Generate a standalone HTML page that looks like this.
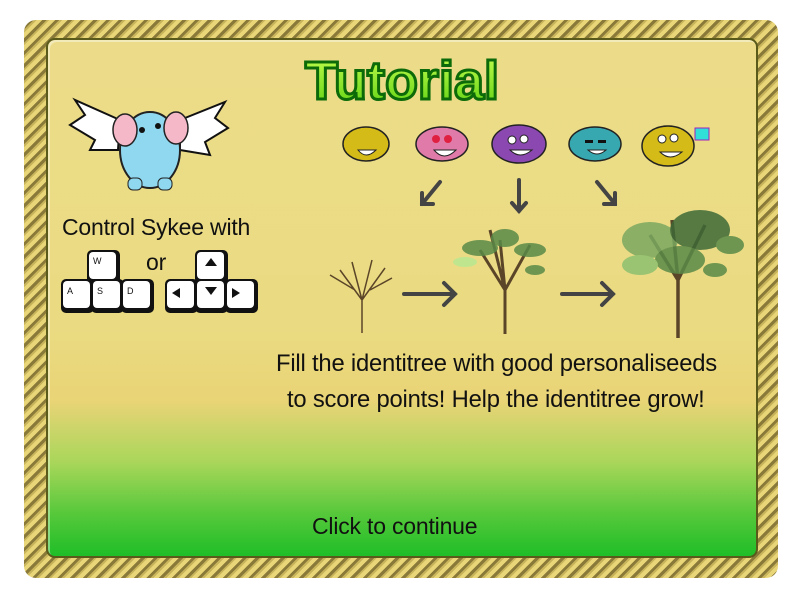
<!DOCTYPE html>
<html><head><meta charset="utf-8"><style>
body{margin:0;width:800px;height:600px;background:#fff;position:relative;overflow:hidden;font-family:"Liberation Sans",sans-serif}
.rope{position:absolute;left:24px;top:20px;width:754px;height:558px;border-radius:12px;
background:repeating-linear-gradient(135deg,#e8d678 0 4px,#8a7a3a 4px 7px,#c8b45a 7px 9px)}
.panel{position:absolute;left:46px;top:38px;width:708px;height:516px;border-radius:9px;border:2px solid #5a5a1a;
background:linear-gradient(#ecdc8a 0%,#eadb82 55%,#e9d476 70%,#a8d65a 82%,#55c83a 92%,#1fbe28 100%);box-shadow:inset 2px 2px 0 rgba(255,255,255,.4)}
.t{position:absolute;color:#111;font-size:23px;white-space:nowrap;letter-spacing:-0.2px}
</style></head><body>
<div class="rope"></div>
<div class="panel"></div>
<svg width="800" height="600" style="position:absolute;left:0;top:0">
<defs><linearGradient id="g" x1="0" y1="0" x2="0" y2="1"><stop offset="0" stop-color="#c8ff50"/><stop offset="1" stop-color="#5ad010"/></linearGradient></defs>
<text x="402" y="99" text-anchor="middle" font-family="Liberation Sans" font-weight="bold" font-size="54" fill="url(#g)" stroke="#0d6a08" stroke-width="3">Tutorial</text>
<path d="M120 120 L75 100 L85 115 L70 125 L95 140 L90 150 L118 150Z" fill="#fff" stroke="#111" stroke-width="2"/>
<path d="M180 120 L225 102 L215 118 L228 128 L205 142 L210 155 L180 150Z" fill="#fff" stroke="#111" stroke-width="2"/>
<ellipse cx="150" cy="150" rx="30" ry="38" fill="#8fd8f0" stroke="#222" stroke-width="2"/>
<ellipse cx="125" cy="130" rx="12" ry="16" fill="#f4b8c8" stroke="#222" stroke-width="1.5"/>
<ellipse cx="176" cy="128" rx="12" ry="16" fill="#f4b8c8" stroke="#222" stroke-width="1.5"/>
<circle cx="142" cy="130" r="3" fill="#111"/><circle cx="158" cy="126" r="3" fill="#111"/>
<rect x="128" y="178" width="14" height="12" rx="5" fill="#8fd8f0" stroke="#222"/><rect x="158" y="178" width="14" height="12" rx="5" fill="#8fd8f0" stroke="#222"/>
<g fill="#111">
<rect x="87" y="250" width="33" height="34" rx="5"/><rect x="61" y="279" width="33" height="34" rx="5"/><rect x="91" y="279" width="33" height="34" rx="5"/><rect x="121" y="279" width="33" height="34" rx="5"/>
<rect x="195" y="250" width="33" height="34" rx="5"/><rect x="165" y="279" width="33" height="34" rx="5"/><rect x="195" y="279" width="33" height="34" rx="5"/><rect x="225" y="279" width="33" height="34" rx="5"/>
</g>
<g fill="#fff">
<rect x="89" y="252" width="27" height="27" rx="4"/><rect x="63" y="281" width="27" height="27" rx="4"/><rect x="93" y="281" width="27" height="27" rx="4"/><rect x="123" y="281" width="27" height="27" rx="4"/>
<rect x="197" y="252" width="27" height="27" rx="4"/><rect x="167" y="281" width="27" height="27" rx="4"/><rect x="197" y="281" width="27" height="27" rx="4"/><rect x="227" y="281" width="27" height="27" rx="4"/>
</g>
<g font-size="9" font-family="Liberation Sans" fill="#111"><text x="93" y="264">W</text><text x="67" y="294">A</text><text x="97" y="294">S</text><text x="127" y="294">D</text></g>
<g fill="#111"><path d="M205 266 L211 258 L217 266Z"/><path d="M205 287 L211 295 L217 287Z"/><path d="M180 288 L172 293 L180 298Z"/><path d="M232 288 L240 293 L232 298Z"/></g>
<ellipse cx="366" cy="144" rx="23" ry="17" fill="#d4bb18" stroke="#222" stroke-width="1.5"/>
<ellipse cx="442" cy="144" rx="26" ry="17" fill="#e07aa8" stroke="#222" stroke-width="1.5"/>
<ellipse cx="519" cy="144" rx="27" ry="19" fill="#8a48b0" stroke="#222" stroke-width="1.5"/>
<ellipse cx="595" cy="144" rx="26" ry="17" fill="#38a8b0" stroke="#222" stroke-width="1.5"/>
<ellipse cx="668" cy="146" rx="26" ry="20" fill="#d4bb18" stroke="#222" stroke-width="1.5"/>
<rect x="695" y="128" width="14" height="12" fill="#30e0d8" stroke="#a020c0"/>
<g fill="#fff" stroke="#222"><circle cx="512" cy="140" r="4"/><circle cx="524" cy="139" r="4"/><circle cx="662" cy="139" r="4"/><circle cx="674" cy="138" r="4"/></g>
<g fill="#e02040"><circle cx="436" cy="139" r="4"/><circle cx="448" cy="139" r="4"/></g>
<g fill="#111"><rect x="585" y="140" width="8" height="3"/><rect x="598" y="140" width="8" height="3"/></g>
<g fill="#fff" stroke="#222"><path d="M358 150 Q366 160 376 150Z"/><path d="M434 150 Q444 162 456 150Z"/><path d="M510 150 Q520 160 532 150Z"/><path d="M588 150 Q597 158 606 150Z"/><path d="M660 152 Q670 162 682 152Z"/></g>
<g stroke="#444" stroke-width="4" fill="none" stroke-linecap="round">
<path d="M440 182 L422 204 M422 193 L422 204 L433 204"/><path d="M519 180 L519 211 M512 203 L519 211 L526 203"/><path d="M597 182 L615 204 M615 193 L615 204 L604 204"/>
<path d="M404 294 L455 294 M444 283 L455 294 L444 305"/><path d="M562 294 L613 294 M602 283 L613 294 L602 305"/>
</g>
<g stroke="#5a4528" fill="none">
<path d="M362 333 L362 300 M362 300 L340 270 M362 300 L385 268 M362 300 L352 262 M362 300 L372 260 M355 290 L330 275 M370 290 L392 278" stroke-width="1.5"/>
<path d="M505 334 L505 290 L480 250 M505 290 L530 245 M505 290 L500 240 M505 290 L490 230" stroke-width="3"/>
<path d="M678 338 L678 280 L650 235 M678 280 L705 225 M678 280 L672 220" stroke-width="3.5"/>
</g>
<g fill="#5a8a48" opacity=".85">
<ellipse cx="480" cy="248" rx="18" ry="8"/><ellipse cx="530" cy="250" rx="16" ry="7"/><ellipse cx="505" cy="238" rx="14" ry="9"/><ellipse cx="465" cy="262" rx="12" ry="5" fill="#b8e890"/><ellipse cx="535" cy="270" rx="10" ry="5"/>
<ellipse cx="650" cy="240" rx="28" ry="18" fill="#7aa860"/><ellipse cx="700" cy="230" rx="30" ry="20" fill="#3e6a38"/><ellipse cx="680" cy="260" rx="25" ry="14"/><ellipse cx="730" cy="245" rx="14" ry="9"/><ellipse cx="640" cy="265" rx="18" ry="10" fill="#8ec070"/><ellipse cx="715" cy="270" rx="12" ry="7"/>
</g>
</svg>
<div class="t" style="left:62px;top:214px">Control Sykee with</div>
<div class="t" style="left:146px;top:249px">or</div>
<div class="t" style="left:276px;top:350px;font-size:23.8px">Fill the identitree with good personaliseeds</div>
<div class="t" style="left:287px;top:386px;font-size:23.8px">to score points! Help the identitree grow!</div>
<div class="t" style="left:312px;top:513px">Click to continue</div>
</body></html>
